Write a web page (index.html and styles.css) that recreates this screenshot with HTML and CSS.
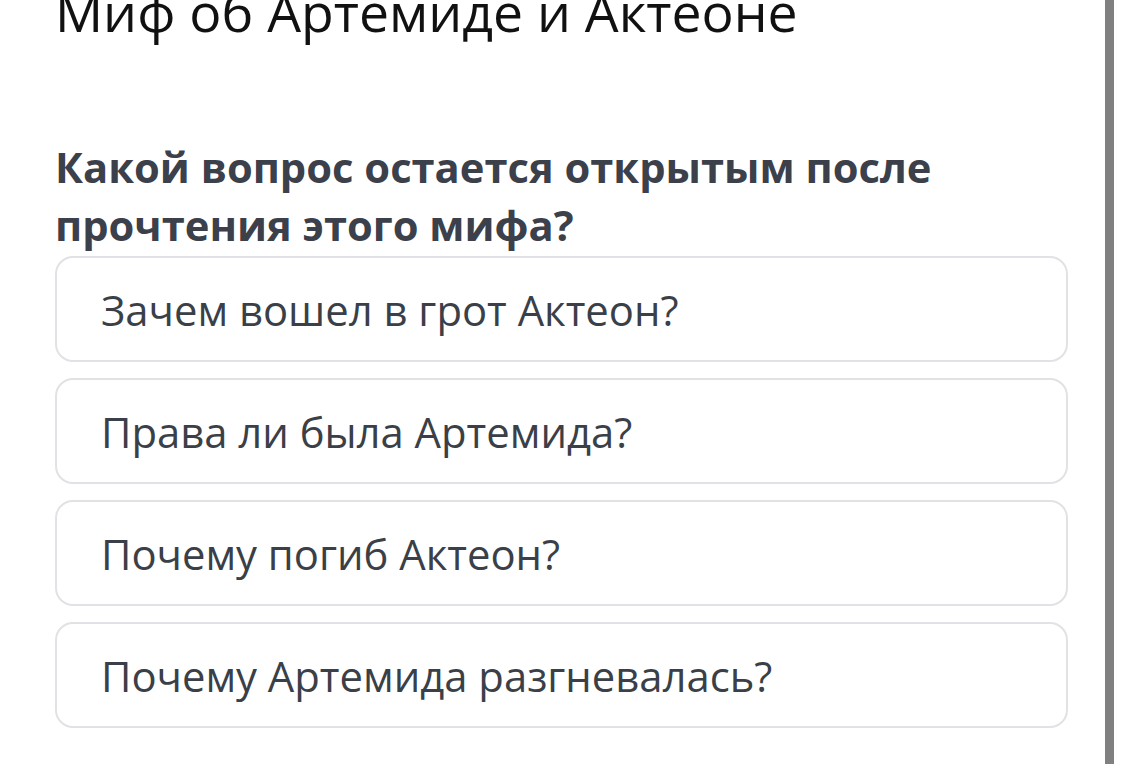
FILE: index.html
```html
<!DOCTYPE html>
<html lang="ru">
<head>
<meta charset="utf-8">
<link rel="stylesheet" href="styles.css">
</head>
<body>
<div class="page">
  <main class="content">
    <h1 class="title">Миф об Артемиде и Актеоне</h1>
    <h2 class="question">Какой вопрос остается открытым после прочтения этого мифа?</h2>
    <div class="options">
      <div class="option">Зачем вошел в грот Актеон?</div>
      <div class="option">Права ли была Артемида?</div>
      <div class="option">Почему погиб Актеон?</div>
      <div class="option">Почему Артемида разгневалась?</div>
    </div>
  </main>
  <div class="scrollbar"></div>
</div>
</body>
</html>
```

FILE: styles.css
```css
html, body {
  margin: 0;
  padding: 0;
  background: #ffffff;
  overflow: hidden;
}
body {
  font-family: "Open Sans", "Noto Sans", sans-serif;
}
.page {
  display: flex;
  width: 1122px;
  height: 764px;
}
.content {
  width: 1013px;
  padding-left: 55px;
  margin-top: -19px;
}
.title {
  margin: 0;
  font-size: 53.5px;
  font-weight: 400;
  line-height: 62px;
  color: #111111;
}
.question {
  margin: 95px 0 0 0;
  font-size: 41.7px;
  font-weight: 700;
  line-height: 58px;
  color: #3b404a;
}
.options {
  display: flex;
  flex-direction: column;
  gap: 16px;
  margin-top: 2px;
}
.option {
  box-sizing: border-box;
  height: 106px;
  border: 2px solid #e2e2e6;
  border-radius: 18px;
  display: flex;
  align-items: center;
  padding-left: 44px;
  font-size: 41.8px;
  color: #3a3f48;
}
.scrollbar {
  margin-left: 37px;
  width: 9px;
  background: #808080;
  height: 764px;
}
```
